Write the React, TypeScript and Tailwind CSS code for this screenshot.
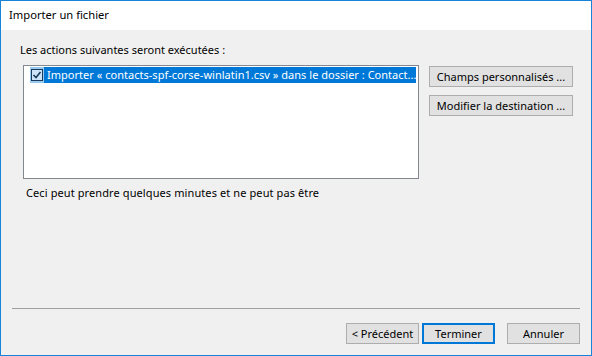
import React from "react";

const font = { fontFamily: '"Noto Sans", "Open Sans", sans-serif' };

const Btn = ({ label, primary, className = "" }: { label: string; primary?: boolean; className?: string }) => (
  <button
    className={
      "h-[21px] bg-[#e1e1e1] text-[11px] leading-none text-black flex items-center justify-center whitespace-nowrap " +
      (primary ? "border-2 border-[#0078d7] " : "border border-[#adadad] ") +
      className
    }
  >
    {label}
  </button>
);

const App = () => {
  return (
    <div style={font} className="w-[592px] h-[356px] border border-[#1883d7] bg-[#f0f0f0] flex flex-col text-black">
      <div className="h-[29px] bg-white flex items-center pl-[8px] text-[11.2px]">Importer un fichier</div>

      <div className="flex-1 flex flex-col">
        <p className="mt-[12px] ml-[19px] text-[11px] leading-[16px]">Les actions suivantes seront exécutées :</p>

        <div className="flex mt-[7px] ml-[22px]">
          <div className="w-[396px] h-[114px] bg-white border border-[#828790] p-[1px]">
            <div className="flex h-[16px] ml-[5px] mr-[1px]">
              <div className="w-[14px] h-[16px] bg-[#99c9ef] flex items-center justify-center">
                <svg width="12" height="12" viewBox="0 0 12 12">
                  <rect x="0.5" y="0.5" width="11" height="11" fill="#cce4f7" stroke="#1a3a5c" />
                  <path d="M2.5 6 L5 8.5 L9.5 3" fill="none" stroke="#1a3a5c" strokeWidth="1.6" />
                </svg>
              </div>
              <div className="flex-1 bg-[#0078d7] text-white text-[11px] leading-[16px] pl-[3px] whitespace-nowrap overflow-hidden tracking-[0.02px]">
                Importer « contacts-spf-corse-winlatin1.csv » dans le dossier : Contact...
              </div>
            </div>
          </div>

          <div className="flex flex-col gap-[8px] ml-[10px] mt-[1px]">
            <Btn label="Champs personnalisés ..." className="w-[144px]" />
            <Btn label="Modifier la destination ..." className="w-[144px]" />
          </div>
        </div>

        <p className="mt-[6px] ml-[25px] text-[11px] leading-[16px] tracking-[0.1px]">Ceci peut prendre quelques minutes et ne peut pas être</p>

        <div className="flex-1" />

        <div className="mx-[11px] h-[2px] border-t border-[#a0a0a0] border-b-white" />

        <div className="flex justify-end gap-[3px] mt-[13px] mb-[11px] mr-[11px]">
          <Btn label="< Précédent" className="w-[73px]" />
          <Btn label="Terminer" primary className="w-[73px]" />
          <Btn label="Annuler" className="w-[73px] ml-[9px]" />
        </div>
      </div>
    </div>
  );
};

export default App;
